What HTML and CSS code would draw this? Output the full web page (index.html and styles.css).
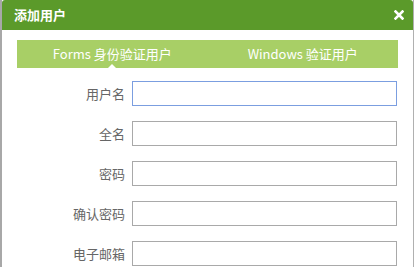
FILE: index.html
```html
<!DOCTYPE html>
<html lang="zh-CN">
<head>
<meta charset="utf-8">
<title>添加用户</title>
<link rel="stylesheet" href="styles.css">
</head>
<body>
<div class="dialog">
  <div class="header">
    <span class="title">添加用户</span>
    <svg class="close" width="10" height="10" viewBox="0 0 10 10"><path d="M1.5 1.5 L8.5 8.5 M8.5 1.5 L1.5 8.5" stroke="#fff" stroke-width="2.6" stroke-linecap="square"/></svg>
  </div>
  <div class="content">
    <div class="tabs">
      <div class="tab active">Forms 身份验证用户</div>
      <div class="tab">Windows 验证用户</div>
    </div>
    <form class="form">
      <label class="label">用户名</label><input class="input focus" type="text">
      <label class="label">全名</label><input class="input" type="text">
      <label class="label">密码</label><input class="input" type="password">
      <label class="label">确认密码</label><input class="input" type="password">
      <label class="label">电子邮箱</label><input class="input" type="text">
    </form>
  </div>
</div>
</body>
</html>
```
FILE: styles.css
```css
html, body {
  margin: 0;
  padding: 0;
  background: #fff;
  font-family: "Noto Sans CJK SC", "Open Sans", sans-serif;
}
.dialog {
  width: 411px;
  height: 267px;
  border-left: 2px solid #a8a8a8;
  border-right: 1px solid #b0b0b0;
  box-sizing: content-box;
  overflow: hidden;
}
.header {
  height: 30px;
  background: #5b9a2a;
  border-top-left-radius: 3px;
  border-top-right-radius: 3px;
  display: flex;
  align-items: center;
  justify-content: space-between;
  padding: 0 9px 0 12px;
}
.title {
  color: #fff;
  font-weight: bold;
  font-size: 13px;
  line-height: 30px;
}
.close {
  display: block;
}
.content {
  padding: 10px 15px 0 15px;
}
.tabs {
  height: 28px;
  background: #a8cf66;
  display: flex;
}
.tab {
  flex: 1;
  color: #fff;
  font-size: 13px;
  line-height: 28px;
  text-align: center;
  position: relative;
}
.tab.active::after {
  content: "";
  position: absolute;
  left: 50%;
  bottom: 0;
  margin-left: -4px;
  border-left: 4px solid transparent;
  border-right: 4px solid transparent;
  border-bottom: 4px solid #fff;
}
.form {
  display: grid;
  grid-template-columns: 108px 265px;
  column-gap: 7px;
  row-gap: 15px;
  margin-top: 13px;
  align-items: center;
}
.label {
  text-align: right;
  font-size: 13px;
  color: #666;
}
.input {
  height: 25px;
  box-sizing: border-box;
  border: 1px solid #a9a9a9;
  padding: 0 4px;
  margin: 0;
  font-size: 13px;
  outline: none;
  background: #fff;
}
.input.focus {
  border-color: #7b9ee0;
}
```
